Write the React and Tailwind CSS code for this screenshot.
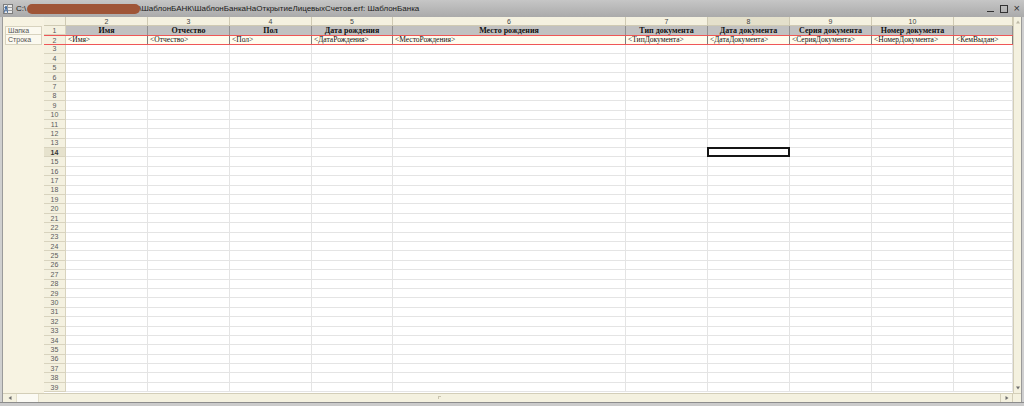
import React from "react";

const cols = [
  { n: "2", h: "Имя", t: "<Имя>" },
  { n: "3", h: "Отчество", t: "<Отчество>" },
  { n: "4", h: "Пол", t: "<Пол>" },
  { n: "5", h: "Дата рождения", t: "<ДатаРождения>" },
  { n: "6", h: "Место рождения", t: "<МестоРождения>" },
  { n: "7", h: "Тип документа", t: "<ТипДокумента>" },
  { n: "8", h: "Дата документа", t: "<ДатаДокумента>" },
  { n: "9", h: "Серия документа", t: "<СерияДокумента>" },
  { n: "10", h: "Номер документа", t: "<НомерДокумента>" },
  { n: "", h: "", t: "<КемВыдан>" },
];

const GRID =
  "grid grid-cols-[22px_82px_82px_82px_81px_233px_82px_82px_82px_82px_1fr]";

const sans = { fontFamily: '"Liberation Sans", Arial, sans-serif' };
const serif = { fontFamily: '"Liberation Serif", "Times New Roman", serif' };

function RowNum({ n, active }) {
  return (
    <div
      className={`flex items-center justify-center border-r border-b border-[#d8d3be] text-[7px] leading-none ${
        active ? "bg-[#e6e2cd] font-bold text-[#333]" : "bg-[#f4f1e0] text-[#5a5a5a]"
      }`}
      style={sans}
    >
      {n}
    </div>
  );
}

export default function App() {
  const rows = [];
  for (let r = 3; r <= 39; r++) rows.push(r);

  return (
    <div className="w-[1024px] h-[406px] flex flex-col bg-[#c9c9c9] overflow-hidden">
      {/* Title bar */}
      <div
        className="h-[17px] shrink-0 flex items-center bg-gradient-to-b from-[#c6c6c6] to-[#aaaaaa] pl-[3px] pr-[4px] text-[8px] text-[#1b1b1b]"
        style={sans}
      >
        <svg width="10" height="10" viewBox="0 0 10 10" className="shrink-0">
          <rect x="0.5" y="0.5" width="9" height="9" fill="#e9e9e9" stroke="#7d7d7d" />
          <line x1="0.5" y1="3.5" x2="9.5" y2="3.5" stroke="#9a9a9a" />
          <line x1="0.5" y1="6.5" x2="9.5" y2="6.5" stroke="#9a9a9a" />
          <line x1="4.5" y1="0.5" x2="4.5" y2="9.5" stroke="#9a9a9a" />
          <path d="M1.5 8.5 L3 2 L4.5 8.5" fill="none" stroke="#3a6aa8" strokeWidth="1" />
        </svg>
        <span className="ml-[3px]">C:\</span>
        <div className="h-[10px] w-[113px] rounded-full bg-[#9f5537] ml-[1px] -mr-[1px]" />
        <span>\ШаблонБАНК\ШаблонБанкаНаОткрытиеЛицевыхСчетов.erf: ШаблонБанка</span>
        <div className="ml-auto flex items-center gap-[6px] text-[#333]">
          <div className="w-[7px] h-[1.5px] bg-[#333] mt-[6px]" />
          <div className="w-[8px] h-[8px] border border-[#333]" />
          <span className="text-[11px] leading-none">×</span>
        </div>
      </div>

      {/* Body */}
      <div className="flex h-[375.6px] shrink-0">
        {/* left frame */}
        <div className="w-[3px] bg-[#cfcfcf] border-r border-[#9a9a9a]" />
        {/* group labels */}
        <div className="w-[41px] bg-[#f7f3e2] flex flex-col" style={sans}>
          <div className="h-[9px]" />
          <div className="h-[9.4px] mx-[2px] border border-[#d8d3bf] bg-[#fbf9ef] flex items-center px-[2px] text-[7px] leading-none text-[#555]">
            Шапка
          </div>
          <div className="h-[9.4px] mx-[2px] border border-t-0 border-[#d8d3bf] bg-[#fbf9ef] flex items-center px-[2px] text-[7px] leading-none text-[#555]">
            Строка
          </div>
        </div>

        {/* grid */}
        <div className="flex-1 flex flex-col bg-white min-w-0">
          {/* column header */}
          <div className={`${GRID} h-[9px] shrink-0`} style={sans}>
            <div className="bg-[#f4f1e0] border-r border-b border-[#cfcab3]" />
            {cols.map((c, i) => (
              <div
                key={i}
                className={`flex items-center justify-center border-r border-b border-[#cfcab3] text-[7px] leading-none text-[#444] ${
                  i === 6 ? "bg-[#e4e0cb]" : "bg-[#f4f1e0]"
                }`}
              >
                {c.n}
              </div>
            ))}
          </div>

          {/* row 1 */}
          <div className={`${GRID} h-[9.4px] shrink-0`}>
            <RowNum n="1" />
            {cols.map((c, i) => (
              <div
                key={i}
                className="flex items-center justify-center bg-[#c1c1c1] border-r border-[#8f8f8f] text-[8px] font-bold leading-none text-[#111] whitespace-nowrap overflow-hidden"
                style={serif}
              >
                {c.h}
              </div>
            ))}
          </div>

          {/* row 2 */}
          <div className={`${GRID} h-[9.4px] shrink-0 border-y border-[#ef5656]`}>
            <div
              className="flex items-center justify-center bg-[#f4f1e0] border-r border-[#d8d3be] text-[7px] leading-none text-[#5a5a5a]"
              style={sans}
            >
              2
            </div>
            {cols.map((c, i) => (
              <div
                key={i}
                className="flex items-center bg-[#fffcee] border-r border-[#7d7d7d] pl-[2px] text-[7.5px] leading-none text-[#111] whitespace-nowrap overflow-hidden"
                style={serif}
              >
                {c.t}
              </div>
            ))}
          </div>

          {rows.map((r) => (
            <div key={r} className={`${GRID} h-[9.4px] shrink-0`}>
              <RowNum n={String(r)} active={r === 14} />
              {cols.map((c, i) => (
                <div key={i} className="relative border-r border-b border-[#e4e4e4]">
                  {r === 14 && i === 6 && (
                    <div className="absolute -inset-[1px] border-2 border-[#151515]" />
                  )}
                </div>
              ))}
            </div>
          ))}
        </div>

        {/* vertical scrollbar */}
        <div className="w-[8px] bg-[#f4f1df] border-l border-[#d3ceb8] flex flex-col items-center justify-between py-[2px]">
          <svg width="6" height="6" viewBox="0 0 6 6">
            <path d="M1 4.5 L3 1.5 L5 4.5 Z" fill="#bdb9a6" />
          </svg>
          <svg width="6" height="6" viewBox="0 0 6 6">
            <path d="M1 1.5 L3 4.5 L5 1.5 Z" fill="#6e6e6e" />
          </svg>
        </div>
        {/* right frame */}
        <div className="w-[3px] bg-[#cfcfcf] border-l border-[#9a9a9a]" />
      </div>

      {/* horizontal scrollbar */}
      <div className="h-[9px] shrink-0 flex">
        <div className="w-[3px] bg-[#cfcfcf] border-r border-[#9a9a9a]" />
        <div className="flex-1 flex bg-[#f4f1df] border-t border-[#d3ceb8]">
          <div className="w-[13px] flex items-center justify-center">
            <svg width="6" height="6" viewBox="0 0 6 6">
              <path d="M4.5 1 L1.5 3 L4.5 5 Z" fill="#6e6e6e" />
            </svg>
          </div>
          <div className="w-[23px] bg-[#fbfaf4] border-x border-[#e2ddc9]" />
          <div className="flex-1 flex items-center justify-center">
            <div className="w-[3px] h-[3px] border-l border-t border-[#c9c4ae] ml-[-160px]" />
          </div>
          <div className="w-[12px] border-l border-[#d3ceb8] flex items-center justify-center">
            <svg width="6" height="6" viewBox="0 0 6 6">
              <path d="M1.5 1 L4.5 3 L1.5 5 Z" fill="#6e6e6e" />
            </svg>
          </div>
          <div className="w-[9px] border-l border-[#d3ceb8]" />
        </div>
        <div className="w-[3px] bg-[#cfcfcf] border-l border-[#9a9a9a]" />
      </div>

      {/* bottom frame */}
      <div className="flex-1 bg-[#cbcbcb] border-t border-[#8d8d8d]" />
    </div>
  );
}
